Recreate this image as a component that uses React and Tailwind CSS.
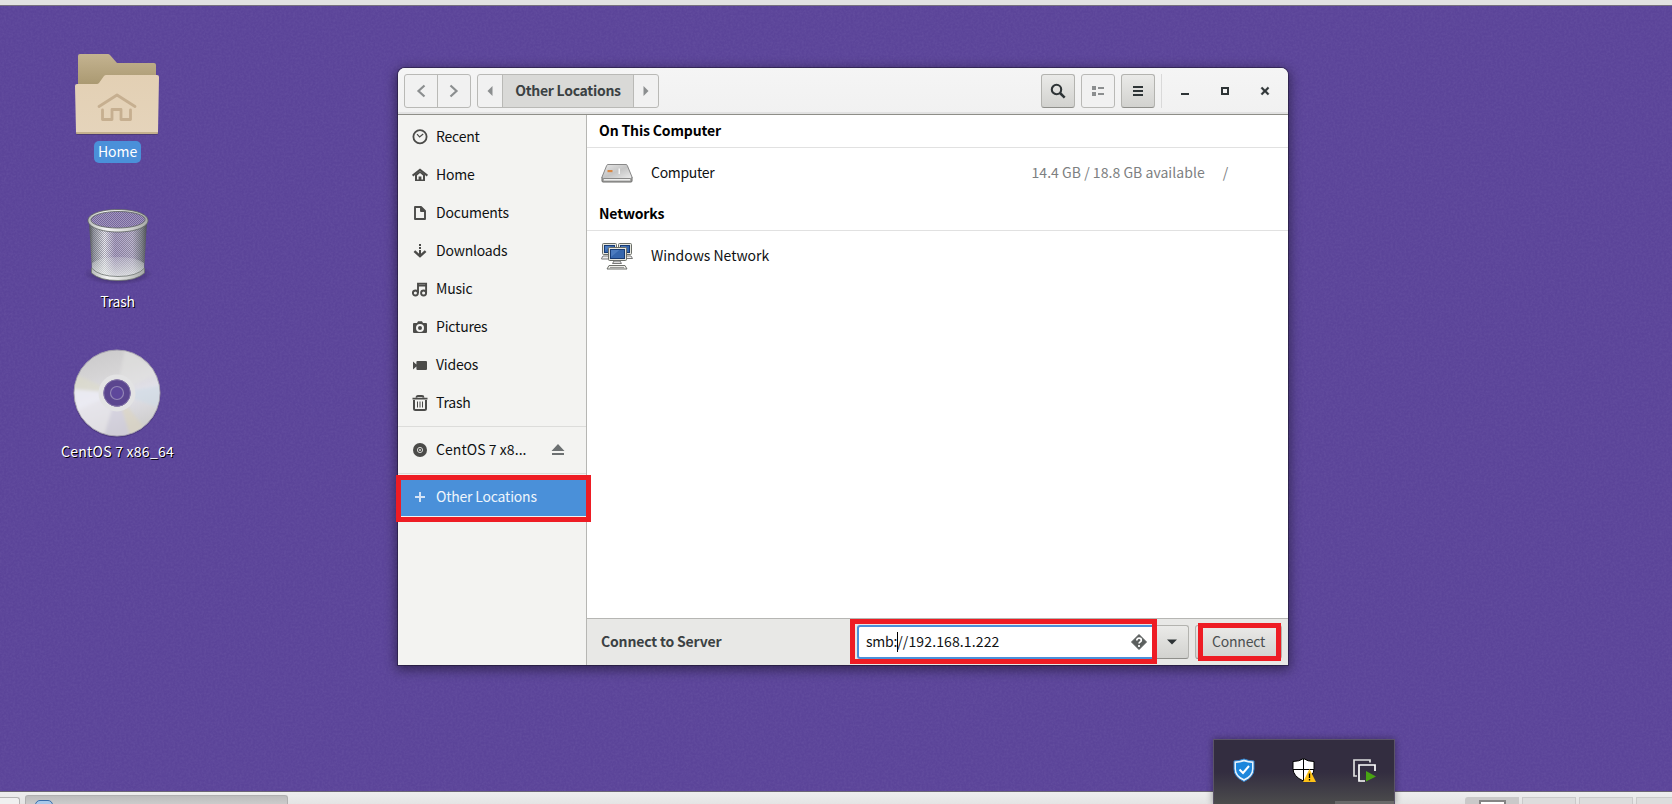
const Svg = ({ w = 16, h = 16, children, className = "" }) => (
  <svg width={w} height={h} viewBox={`0 0 ${w} ${h}`} className={`block shrink-0 ${className}`}>{children}</svg>
);

const ICONS = {
  recent: (<g fill="none" stroke="#4b4b49"><circle cx="8" cy="7.700" r="6.600" strokeWidth="1.800" /><path d="M5 5.200 7.600 8 11.200 5" strokeWidth="1.200" /></g>),
  home: (<g><path d="M.6 8.6 8 2.8l7.4 5.800" fill="none" stroke="#4b4b49" strokeWidth="2" /><path fillRule="evenodd" d="M3 7.500 8 4l5 3.500V14H3ZM5 8.500V12.400h1.600V9.500h2.800v2.900H11V8.500L8 6Z" fill="#4b4b49" /></g>),
  documents: (<path d="M3 2h6l4 4v8H3Z M9 2v4h4" fill="none" stroke="#4b4b49" strokeWidth="1.9" strokeLinejoin="round" />),
  downloads: (<g fill="none" stroke="#4b4b49" strokeWidth="2"><path d="M8 1v2M8 4v2M8 7v6" /><path d="m2.400 8.200 5.600 5 5.600-5" strokeWidth="2.400" /></g>),
  music: (<g fill="none" stroke="#4b4b49" strokeWidth="1.9"><path d="M6 12V2.6h8.1V12M6 4.6h8" /><circle cx="3.4" cy="12" r="2.5" /><circle cx="11.6" cy="12" r="2.5" /></g>),
  pictures: (<path fillRule="evenodd" fill="#4b4b49" d="M2 4h3l1-1.8h4L11 4h3q1 0 1 1v8q0 1-1 1H2q-1 0-1-1V5q0-1 1-1Zm6 .9a4 4 0 1 0 0 8 4 4 0 0 0 0-8Zm0 2a2 2 0 1 1 0 4 2 2 0 0 1 0-4Z" />),
  videos: (<path fill="#4b4b49" d="M1 4.600 4.400 7.500V5q0-1 1-1H14q1 0 1 1v7q0 1-1 1H5.400q-1 0-1-1V9.500L1 12.400Z" />),
  trash: (<g fill="none" stroke="#4b4b49"><path d="M.5 3.600h15M4.500 2.500q0-1.500 1.500-1.500h4q1.500 0 1.500 1.500" strokeWidth="1.8" /><path d="M2 5v8.500q0 1.500 1.500 1.500h9q1.500 0 1.500-1.500V5" strokeWidth="2" /><path d="M5.500 6.500v6M8 6.500v6M10.500 6.500v6" /></g>),
  disc: (<g><circle cx="8" cy="8" r="7" fill="#4b4b49" /><circle cx="8" cy="8" r="2.600" fill="none" stroke="#d8d8d6" strokeWidth="1" /><circle cx="8" cy="8" r="1" fill="#d8d8d6" /></g>),
  plus: (<path d="M8 3v10M3 8h10" stroke="#d3e3f6" strokeWidth="2" />),
};

const PLACES = [
  ["recent", "Recent"], ["home", "Home"], ["documents", "Documents"], ["downloads", "Downloads"],
  ["music", "Music"], ["pictures", "Pictures"], ["videos", "Videos"], ["trash", "Trash"],
];

const Place = ({ icon, label, active, wide, children }) => (
  <div className={`flex h-[38px] items-center pl-[14px] pr-[21px] ${active ? "bg-[#4a90d9] text-[#eef5fc]" : "text-[#101213]"}`}>
    <Svg>{ICONS[icon]}</Svg>
    <span className={`ml-2 flex-1 whitespace-nowrap pb-[2px] ${wide ? "tracking-[0.06px]" : ""}`}>{label}</span>
    {children}
  </div>
);

const raised = "border-[#b3b3af] border-b-[#8f8f8b] bg-linear-to-b from-[#eaeae8] to-[#d2d2cf]";

const HeaderButton = ({ flat, children }) => (
  <button className={`flex h-[34px] w-[34px] items-center justify-center rounded-[3px] border ${flat ? "border-[#b9b9b6] bg-[#f1f1f1]" : raised}`}>{children}</button>
);

const FolderIcon = () => (
  <Svg w={88} h={84}>
    <defs>
      <linearGradient id="fb" x2="0" y2="1"><stop stopColor="#c4b390" /><stop offset="1" stopColor="#a8976f" /></linearGradient>
      <linearGradient id="ff" x2="0" y2="1"><stop stopColor="#e3d0b4" /><stop offset="1" stopColor="#e5d4bb" /></linearGradient>
    </defs>
    <path d="M5 32V2q0-2 2-2h28q1 0 2 1l7 8h37q2 0 2 2v22Z" fill="url(#fb)" />
    <path d="M3 79q0 2 2 2h79q1 0 1-2Z" fill="#463466" opacity=".7" />
    <path d="M2 32q0-2 2-2h20q1 0 2-1l5-7q1-1 2-1h51q2 0 2 2l-1 55q0 2-2 2H5q-2 0-2-2Z" fill="url(#ff)" />
    <path d="M3 79h82" stroke="#b9a47f" strokeWidth="1.500" />
    <path d="M26 52.500 44 41l18 11.500M29.500 56v9.500h9.500v-10h9v10h9.500V56" fill="none" stroke="#c6af90" strokeWidth="2.800" strokeLinecap="round" strokeLinejoin="round" />
  </Svg>
);

const BinIcon = () => (
  <Svg w={72} h={80} className="-mt-[5px] ml-[2px]">
    <defs>
      <linearGradient id="bin"><stop stopColor="#4f5653" /><stop offset=".08" stopColor="#9fa6a6" stopOpacity=".9" /><stop offset=".27" stopColor="#f1f3f5" stopOpacity=".95" /><stop offset=".45" stopColor="#bdb4d0" stopOpacity=".85" /><stop offset=".75" stopColor="#cfcbda" stopOpacity=".85" /><stop offset=".9" stopColor="#8d9493" stopOpacity=".9" /><stop offset="1" stopColor="#4c5350" /></linearGradient>
      <linearGradient id="rim"><stop stopColor="#b8bbb9" /><stop offset=".3" stopColor="#f4f5f4" /><stop offset=".7" stopColor="#d0d2d0" /><stop offset="1" stopColor="#a4a7a5" /></linearGradient>
      <pattern id="mesh" width="2" height="2" patternUnits="userSpaceOnUse"><path d="M0 0h1v1H0zM1 1h1v1H1z" fill="#4f4a5c" opacity=".42" /></pattern>
      <pattern id="meshlight" width="2" height="2" patternUnits="userSpaceOnUse"><path d="M0 0h1v1H0zM1 1h1v1H1z" fill="#b7aecb" opacity=".7" /></pattern>
      <linearGradient id="floor" x2="0" y2="1"><stop stopColor="#dfe4e1" stopOpacity=".25" /><stop offset="1" stopColor="#eef2ef" stopOpacity=".8" /></linearGradient>
      <radialGradient id="binsh"><stop stopColor="#1e1238" stopOpacity=".8" /><stop offset="1" stopColor="#1e1238" stopOpacity="0" /></radialGradient>
    </defs>
    <ellipse cx="36" cy="67" rx="35" ry="11" fill="url(#binsh)" />
    <path d="M7 13 10 66q10 7 26 7t26-7l3-53Z" fill="url(#bin)" />
    <path d="M7 13 10 66q10 7 26 7t26-7l3-53Z" fill="url(#mesh)" />
    <path d="M10 56q8-6 26-6t26 6v10q-10 5-26 5t-26-5Z" fill="url(#floor)" />
    <path d="M9.500 61v5q8 7.500 26.500 7.500T62.500 66v-5Q55 69.500 36 69.500T9.500 61Z" fill="url(#rim)" stroke="#6d7370" strokeWidth=".8" />
    <ellipse cx="36" cy="13" rx="28" ry="9" fill="#75659d" />
    <ellipse cx="36" cy="13" rx="28" ry="9" fill="url(#meshlight)" />
    <path fillRule="evenodd" d="M36 2.500c-17 0-30 4.500-30 11s13 11.500 30 11.500 30-5 30-11.500-13-11-30-11Zm0 2c15 0 27 3.500 27 8s-12 8.500-27 8.500S9 17.500 9 13s12-8.500 27-8.500Z" fill="url(#rim)" stroke="#5d6260" strokeWidth=".8" />
  </Svg>
);

const CdIcon = () => (
  <Svg w={92} h={92} className="-mt-[6px]">
    <defs><mask id="hole"><path d="M0 0h92v92H0z" fill="#fff" /><circle cx="46" cy="46" r="13.500" /></mask>
      <clipPath id="cdc"><circle cx="46" cy="46" r="42.500" /></clipPath>
      <filter id="soft"><feGaussianBlur stdDeviation="1.600" /></filter>
      <linearGradient id="cdg" x2=".3" y2="1"><stop stopColor="#c8c7c8" /><stop offset=".35" stopColor="#d5d4d5" /><stop offset=".65" stopColor="#e2e1e9" /><stop offset="1" stopColor="#d0cfcf" /></linearGradient></defs>
    <circle cx="46" cy="47" r="43.500" fill="#2d1e52" opacity=".35" />
    <g mask="url(#hole)"><circle cx="46" cy="46" r="43" fill="url(#cdg)" stroke="#a6a3ae" />
      <g clipPath="url(#cdc)" filter="url(#soft)">
        <path d="M46 46 2 26v18Z" fill="#dedcc9" opacity=".55" /><path d="M46 46 2 42l4 22Z" fill="#eeedf6" opacity=".8" /><path d="M46 46 4 62l12 30h16Z" fill="#e9e8ec" opacity=".6" />
        <path d="M46 46 54 0l34 26Z" fill="#e4e3e2" opacity=".55" /><path d="M46 46 92 38v24Z" fill="#cfdce6" opacity=".6" />
        <path d="M46 46 32 92h28Z" fill="#d0cce0" opacity=".5" /><path d="M46 46 60 92l14-10Z" fill="#dcd6bd" opacity=".55" />
      </g>
      <circle cx="46" cy="46" r="16" fill="none" stroke="#e3e3e4" strokeWidth="5" /></g>
    <circle cx="46" cy="46" r="13.300" fill="#5b468f" stroke="#8d80ad" strokeWidth=".8" />
    <circle cx="46" cy="46" r="6.500" fill="#5e479b" stroke="#9285b5" strokeWidth="1.200" />
  </Svg>
);

const DriveIcon = () => (
  <Svg w={32} h={22} className="mt-px">
    <defs><linearGradient id="dr" x2="1" y2="1"><stop stopColor="#e9e9e9" /><stop offset=".5" stopColor="#c5c5c5" /><stop offset="1" stopColor="#ececec" /></linearGradient></defs>
    <path d="M1 14v4q0 1 1 1h28q1 0 1-1v-4Z" fill="#a7a7a5" stroke="#6a6a69" />
    <path d="M7 1.500h18q1 0 1.300 1L31 14q.3 1.500-1.500 1.500h-27Q.7 15.500 1 14L5.700 2.500Q6 1.500 7 1.500Z" fill="url(#dr)" stroke="#888" />
    <path d="M3 16h26v1.500H3z" fill="#efefee" /><path d="M6.500 7h5v2.200h-5z" fill="#d98743" /><path d="M17.500 5.500h1.500v5.500h-1.500z" fill="#f4f4f4" />
  </Svg>
);

const Monitor = ({ x, y, w, h }) => (
  <g><rect x={x + .5} y={y + .5} width={w - 1} height={h - 1} rx="1" fill="#e5e6df" stroke="#6b6e68" />
    <rect x={x + 2.500} y={y + 2.500} width={w - 5} height={h - 5} fill="#3566ad" stroke="#173a73" />
    <path d={`M${x + 3} ${y + h - 4}L${x + w * .6} ${y + 3}h-${w * .6 - 3}Z`} fill="#5a88cb" opacity=".6" /></g>
);
const NetworkIcon = () => (
  <Svg w={32} h={28} className="mt-[2px]">
    <path d="M.5 15.500 2 13h9v3H.5ZM21 13h9l1.500 2.500H21Z" fill="#eee" stroke="#777" />
    <Monitor x={1} y={0} w={15} h={12} /><Monitor x={17} y={0} w={14} h={12} /><Monitor x={7} y={4} w={19} h={14} />
    <path d="M13 18h6l1.500 2.500h-9Z" fill="#ddd" stroke="#777" /><path d="M8 22.500h16l2 3.500H6Z" fill="#ecece8" stroke="#6f716c" /><path d="M9 24.500h14" stroke="#999" />
  </Svg>
);

const DesktopIcon = ({ children, label, selected, wide }) => (
  <div className="flex w-[150px] flex-col items-center">
    {children}
    <span className={`whitespace-nowrap leading-[21px] text-white ${selected ? "ml-px rounded-[5px] bg-[#4a90d9] px-[4px] pb-px tracking-[-0.05px]" : "ml-px [text-shadow:1px_1px_0_#000]"} ${wide ? "tracking-[0.26px]" : ""}`}>{label}</span>
  </div>
);

const Section = ({ title, children }) => (
  <section>
    <h2 className="flex h-[33px] items-center border-b border-[#e1e1e1] pb-[2px] pl-3 font-bold tracking-[-0.15px] text-black">{title}</h2>
    <div className="flex h-[50px] items-center pl-[14px] text-[#101213]">{children}</div>
  </section>
);

export default function App() {
  return (
    <div className="relative flex h-[804px] w-[1672px] flex-col overflow-hidden bg-[#5b4499] font-['Noto_Sans_CJK_SC','Noto_Sans',sans-serif] text-[14px] leading-5 tracking-[-0.2px]">
      <svg className="absolute inset-0" width="1672" height="804"><filter id="grain"><feTurbulence type="fractalNoise" baseFrequency=".45" numOctaves="2" seed="4" /><feColorMatrix values="0 0 0 0 .65  0 0 0 0 .6  0 0 0 0 .85  .5 0 0 0 -.15" /></filter><rect width="1672" height="804" filter="url(#grain)" opacity=".22" /></svg>
      <div className="relative h-[6px] shrink-0 border-b border-[#77717f] bg-[#e2e2e2]" />

      <main className="relative flex min-h-0 flex-1">
        <div className="flex w-[398px] flex-col pl-[42px] pt-[48px]">
          <div className="h-[158px]"><DesktopIcon label="Home" selected><div className="h-[87px]"><FolderIcon /></div></DesktopIcon></div>
          <div className="h-[141px]"><DesktopIcon label="Trash"><div className="h-[79px]"><BinIcon /></div></DesktopIcon></div>
          <DesktopIcon label="CentOS 7 x86_64" wide><div className="h-[88px]"><CdIcon /></div></DesktopIcon>
        </div>

        <div className="mt-[62px] flex h-[597px] w-[890px] flex-col rounded-t-[7px] bg-white shadow-[0_0_0_1px_#00000050,0_3px_12px_2px_#00000070]">
          <header className="flex h-[47px] shrink-0 items-center rounded-t-[7px] border-b border-[#8e8e88] bg-linear-to-b from-[#f5f5f5] to-[#f1f1f1] pl-[6px] pr-[3px] shadow-[inset_0_-2px_0_#e2e2e2]">
            <div className="flex h-[34px] w-[67px] rounded-[3px] border border-[#b9b9b6] bg-[#f1f1f1]">
              <div className="flex w-[33px] items-center justify-center border-r border-[#b9b9b6]"><Svg><path d="m11.500 2.500-6 5.500 6 5.500" fill="none" stroke="#8b8e8f" strokeWidth="2.200" /></Svg></div>
              <div className="flex flex-1 items-center justify-center"><Svg><path d="m4.500 2.500 6 5.500-6 5.500" fill="none" stroke="#8b8e8f" strokeWidth="2.200" /></Svg></div>
            </div>
            <div className="ml-[6px] flex h-[34px] w-[182px] rounded-[3px] border border-[#b9b9b6] bg-[#f1f1f1]">
              <div className="flex w-[25px] items-center justify-center border-r border-[#b9b9b6]"><Svg w={6} h={10}><path d="M5.500 0v10L.5 5Z" fill="#8b8e8f" /></Svg></div>
              <div className="flex flex-1 items-center justify-center whitespace-nowrap bg-[#d9d9d7] pb-[2px] font-bold tracking-[-0.28px] text-[#3b4143]">Other Locations</div>
              <div className="flex w-[25px] items-center justify-center border-l border-[#b9b9b6]"><Svg w={6} h={10}><path d="M.5 0v10l5-5Z" fill="#8b8e8f" /></Svg></div>
            </div>
            <div className="ml-auto flex gap-[6px]">
              <HeaderButton><Svg><circle cx="6.500" cy="6.500" r="4.700" fill="none" stroke="#2e3436" strokeWidth="2.100" /><path d="m10 10 4.700 4.700" stroke="#2e3436" strokeWidth="2.500" /></Svg></HeaderButton>
              <HeaderButton flat><Svg><path d="M2 3h4v4H2zM2 9h4v4H2zM8 4h6v2H8zM8 10h6v2H8z" fill="#8b8e8f" /></Svg></HeaderButton>
              <HeaderButton><Svg><path d="M3 3h10v2H3zM3 7h10v2H3zM3 11h10v2H3z" fill="#2e3436" /></Svg></HeaderButton>
            </div>
            <div className="ml-[6px] h-[34px] w-px bg-[#d9d9d9]" />
            <div className="ml-[3px] flex">
              {["M4 10h8v2H4z", "M4 4h8v8H4ZM6 6v4h4V6Z", "M4 5.200 5.200 4 8 6.700 10.800 4 12 5.200 9.400 8 12 10.800 10.800 12 8 9.300 5.200 12 4 10.800 6.600 8Z"].map((d) => (
                <div key={d} className="flex h-[34px] w-10 items-center justify-center"><Svg><path fillRule="evenodd" d={d} fill="#2e3436" stroke={d.length > 40 ? "#2e3436" : "none"} strokeWidth=".5" /></Svg></div>
              ))}
            </div>
          </header>

          <div className="flex min-h-0 flex-1">
            <aside className="w-[189px] shrink-0 border-r border-[#b6b6b3] bg-[#f3f3f1] pt-[3px]">
              {PLACES.map(([icon, label]) => <Place key={label} icon={icon} label={label} />)}
              <div className="my-1 h-px bg-[#dcdcda]" />
              <Place icon="disc" label="CentOS 7 x8..." wide><Svg w={14} h={12}><path d="M7 0 13.500 7H.5ZM1 9h12v2H1z" fill="#6c7071" /></Svg></Place>
              <div className="my-1 h-px bg-[#dcdcda]" />
              <div className="relative">
                <Place icon="plus" label="Other Locations" active />
                <div className="absolute -left-[2px] -top-[3px] h-[47px] w-[195px] border-[5px] border-[#ee1c24]" />
              </div>
            </aside>
            <div className="flex flex-1 flex-col">
              <Section title="On This Computer">
                <DriveIcon /><span className="ml-[18px] flex-1 pb-[2px] tracking-[-0.3px]">Computer</span><span className="pb-[2px] tracking-[0.04px] text-[#7d8081]">14.4 GB / 18.8 GB available</span><span className="ml-[18px] mr-[60px] pb-[2px] text-[#7d8081]">/</span>
              </Section>
              <Section title="Networks"><NetworkIcon /><span className="ml-[18px] pb-[2px] tracking-[-0.03px]">Windows Network</span></Section>
              <footer className="mt-auto flex h-[47px] items-center border-t border-[#b6b6b3] bg-[#e8e8e6] pl-[14px] pr-[6px]">
                <span className="flex-1 pb-[2px] font-bold tracking-[-0.17px] text-[#3b4143]">Connect to Server</span>
                <div className="relative flex">
                  <div className="flex h-[34px] w-[299px] items-center rounded-l-[3px] border-2 border-r-0 border-[#4a90d9] bg-white pl-[7px] pr-[9px] tracking-[0.06px] text-[#101213]">
                    <span className="pb-[2px] tracking-[-0.2px]">smb:</span><span className="-mr-px h-5 w-px bg-black" /><span className="flex-1 pb-[2px] tracking-[0.12px]">//192.168.1.222</span>
                    <Svg><path d="M8 .5 15.500 8 8 15.500.5 8Z" fill="#5b5f5e" stroke="#5b5f5e" strokeLinejoin="round" /><path d="M5.800 6.500q0-2.300 2.300-2.300 2.200 0 2.200 2 0 1.200-1.200 1.800-1 .5-1 1.600M8 11v2" fill="none" stroke="#fff" strokeWidth="1.700" /></Svg>
                  </div>
                  <div className={`flex h-[34px] w-[33px] items-center justify-center rounded-r-[3px] border pr-[2px] ${raised}`}><Svg w={10} h={6}><path d="M0 .5h10l-5 5Z" fill="#2e3436" /></Svg></div>
                  <div className="absolute -left-[7px] -top-[6px] h-[45px] w-[307px] border-[5px] border-[#ee1c24]" />
                </div>
                <div className="relative ml-[6px]">
                  <div className={`flex h-[34px] w-[87px] items-center justify-center rounded-[3px] border pb-[2px] text-[#4a4f50] ${raised}`}>Connect</div>
                  <div className="absolute left-[3px] -top-[2px] h-[38px] w-[83px] border-[5px] border-[#ee1c24]" />
                </div>
              </footer>
            </div>
          </div>
        </div>
      </main>

      <footer className="relative flex h-[13px] shrink-0 items-end overflow-hidden border-t border-[#6b6675] bg-linear-to-b from-[#eeeeee] to-[#e4e4e4]">
        <div className="h-[7px] w-5 rounded-tr-[3px] border-r border-t border-[#b4b4b4] bg-[#f0f0f0]" />
        <div className="ml-[5px] h-[9px] w-[263px] overflow-hidden rounded-t-[3px] border border-b-0 border-[#b0b0b0] bg-linear-to-b from-[#bdbdbd] to-[#cbcbcb] pl-[9px] pt-1">
          <div className="h-6 w-[18px] rounded-[5px] border-[1.500px] border-[#3a6ca8] bg-[#a9c9ea]" />
        </div>
        <div className="ml-auto flex h-[7px] gap-[3px]">
          <div className="flex w-[54px] justify-center rounded-tl-[3px] bg-[#c9c9c9] pt-[3px]"><div className="h-6 w-[27px] border-2 border-[#858585] bg-white" /></div>
          <div className="w-[54px] border border-b-0 border-[#cacaca] bg-[#dddddd]" /><div className="w-[54px] border border-b-0 border-[#cacaca] bg-[#dddddd]" />
          <div className="w-[36px] border border-b-0 border-r-0 border-[#cacaca] bg-[#dddddd]" />
        </div>
      </footer>

      <div className="absolute left-[1213px] top-[739px] flex h-[65px] w-[182px] border border-b-0 border-[#5a5367] bg-linear-to-b from-[#332d40] from-50% to-[#4c4c4c] shadow-[0_0_7px_#00000060]">
        <div className="flex h-[60px] flex-1 items-center justify-around">
          <Svg w={24} h={24}><path d="M12 1q5 2 10 2v8q0 8-10 12.500Q2 19 2 11V3q5 0 10-2Z" fill="#e8f2fb" stroke="#2c80cc" /><path d="M12 3.500q4 1.300 8 1.500v6q0 6.500-8 10-8-3.500-8-10V5q4-.2 8-1.500Z" fill="#1c86dc" /><path d="m7.500 11.500 3.500 3.500 6-7" fill="none" stroke="#fff" strokeWidth="2" /></Svg>
          <Svg w={26} h={26}><path d="M12.500 1.500q4 3 10.500 3v7q0 8-10.500 12.500Q2 19.500 2 11.500v-7q6.500 0 10.500-3Z" fill="#fff" stroke="#000" /><path d="M12.500 2v22M2 12.500h21" stroke="#000" /><path d="m18.500 12 6.500 13H12Z" fill="#fdc116" /><path d="M18.500 16.500v4.500M18.500 22v1.500" stroke="#000" strokeWidth="1.300" /></Svg>
          <Svg w={24} h={24}><path d="M18 4.500V2H2v16h3" fill="none" stroke="#ddd" strokeWidth="1.700" /><path d="M23 13V7H7v16h6" fill="none" stroke="#fff" strokeWidth="1.700" /><path d="m14 13 10 5.500-10 5Z" fill="#48a313" /></Svg>
        </div>
        <div className="absolute bottom-0 right-0 h-[3px] w-[59px] bg-[#696969]" />
      </div>
    </div>
  );
}
